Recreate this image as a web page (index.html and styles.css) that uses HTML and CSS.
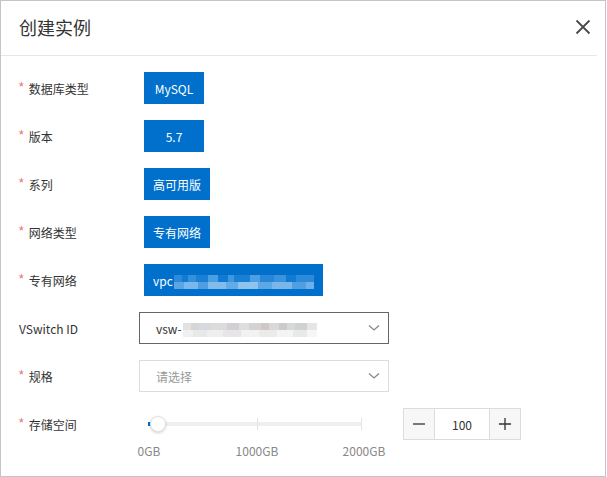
FILE: index.html
```html
<!DOCTYPE html>
<html lang="zh">
<head>
<meta charset="utf-8">
<title>创建实例</title>
<link rel="stylesheet" href="styles.css">
</head>
<body>
<div class="dialog">
  <div class="header">
    <h1 class="title">创建实例</h1>
    <svg class="close" width="16" height="16" viewBox="0 0 16 16"><path d="M1.5 1.5 L14.5 14.5 M14.5 1.5 L1.5 14.5" stroke="#4a4a4a" stroke-width="1.8" fill="none"/></svg>
  </div>
  <div class="form">
    <div class="row">
      <div class="label"><span class="req">*</span>数据库类型</div>
      <div class="tag">MySQL</div>
    </div>
    <div class="row">
      <div class="label"><span class="req">*</span>版本</div>
      <div class="tag">5.7</div>
    </div>
    <div class="row">
      <div class="label"><span class="req">*</span>系列</div>
      <div class="tag">高可用版</div>
    </div>
    <div class="row">
      <div class="label"><span class="req">*</span>网络类型</div>
      <div class="tag">专有网络</div>
    </div>
    <div class="row">
      <div class="label"><span class="req">*</span>专有网络</div>
      <div class="tag tag-vpc">vpc<span class="blur blur-blue"></span></div>
    </div>
    <div class="row">
      <div class="label label-plain">VSwitch ID</div>
      <div class="select select-active">
        <span class="select-text">vsw-<span class="blur blur-gray"></span></span>
        <svg class="chev" width="12" height="8" viewBox="0 0 12 8"><path d="M1 1.5 L6 6 L11 1.5" stroke="#888" stroke-width="1.3" fill="none"/></svg>
      </div>
    </div>
    <div class="row">
      <div class="label"><span class="req">*</span>规格</div>
      <div class="select">
        <span class="select-placeholder">请选择</span>
        <svg class="chev" width="12" height="8" viewBox="0 0 12 8"><path d="M1 1.5 L6 6 L11 1.5" stroke="#888" stroke-width="1.3" fill="none"/></svg>
      </div>
    </div>
    <div class="row row-slider">
      <div class="label"><span class="req">*</span>存储空间</div>
      <div class="slider">
        <div class="slider-rail">
          <div class="track"></div>
          <div class="fill"></div>
          <div class="tick tick-0"></div>
          <div class="tick tick-1"></div>
          <div class="tick tick-2"></div>
          <div class="handle"></div>
        </div>
        <div class="marks">
          <span class="mark mark-0">0GB</span>
          <span class="mark mark-1">1000GB</span>
          <span class="mark mark-2">2000GB</span>
        </div>
      </div>
      <div class="number">
        <div class="num-btn">
          <svg width="12" height="12" viewBox="0 0 12 12"><path d="M0 6 H12" stroke="#333" stroke-width="1.3"/></svg>
        </div>
        <div class="num-val">100</div>
        <div class="num-btn">
          <svg width="12" height="12" viewBox="0 0 12 12"><path d="M0 6 H12 M6 0 V12" stroke="#333" stroke-width="1.3"/></svg>
        </div>
      </div>
    </div>
  </div>
</div>
</body>
</html>
```

FILE: styles.css
```css
* { box-sizing: border-box; }
html, body { margin: 0; padding: 0; background: #fff; }
body {
  font-family: "Noto Sans CJK SC", "Noto Sans", sans-serif;
  color: #333;
  font-size: 12px;
}
.dialog {
  width: 606px;
  height: 477px;
  border: 1px solid #c4c4c4;
  background: #fff;
}
.header {
  height: 55px;
  margin-right: 8px;
  border-bottom: 1px solid #e6e6e6;
  display: flex;
  align-items: center;
  justify-content: space-between;
  padding: 0 6px 2px 18px;
}
.title {
  margin: 0;
  font-size: 18px;
  font-weight: 400;
  color: #333;
  line-height: 24px;
}
.close { display: block; }
.form {
  padding-top: 16px;
}
.row {
  display: flex;
  align-items: center;
  height: 32px;
  margin-bottom: 16px;
}
.label {
  width: 138px;
  padding-left: 18px;
  font-size: 12px;
  color: #333;
  display: flex;
  align-items: center;
}
.label-plain { padding-left: 18px; }
.req {
  color: #e5676a;
  margin-right: 5px;
  font-family: "Liberation Sans", sans-serif;
  font-size: 12px;
  position: relative;
  top: -1px;
}
.tag {
  margin-left: 5px;
  height: 32px;
  min-width: 60px;
  padding: 0 9px;
  background: #0070cc;
  color: #fff;
  font-size: 12px;
  display: flex;
  align-items: center;
  justify-content: center;
}
.tag-vpc {
  width: 179px;
  justify-content: flex-start;
  padding: 0 9px;
}
.blur {
  display: inline-block;
  height: 14px;
  vertical-align: middle;
}
.blur-blue {
  width: 146px;
  margin-left: 1px;
  margin-top: 3px;
  background:
    linear-gradient(90deg, #2e8ad8 0 8px, #0f7bd2 8px 14px, #3590dc 14px 22px, #1b80d4 22px 34px, #4a9fe2 34px 44px, #0f7bd2 44px 54px, #3e98df 54px 60px, #1a80d4 60px 76px, #4aa0e2 76px 86px, #2886d7 86px 100px, #3a93dd 100px 112px, #0f7bd2 112px 122px, #2e8ad8 122px 146px) top / 100% 7px no-repeat,
    linear-gradient(90deg, #5aa6e4 0 10px, #7ab7ea 10px 24px, #4d9fe2 24px 34px, #82bcec 34px 52px, #63abe6 52px 64px, #8ec3ee 64px 84px, #5ca8e5 84px 98px, #7ab6ea 98px 118px, #4f9fe2 118px 132px, #6cb0e8 132px 146px) bottom / 100% 7px no-repeat;
}
.select {
  margin-left: 0;
  width: 250px;
  height: 32px;
  border: 1px solid #dcdcdc;
  display: flex;
  align-items: center;
  justify-content: space-between;
  padding: 0 8px 0 16px;
}
.select-active { border-color: #666; }
.select-text { color: #333; display: flex; align-items: center; }
.blur-gray {
  width: 134px;
  margin-left: 1px;
  margin-top: 4px;
  background:
    linear-gradient(90deg, #e2e2e2 0 8px, #d6d6d6 8px 16px, #d7d9e0 16px 28px, #dcdcdc 28px 44px, #d3cfd4 44px 56px, #dedede 56px 66px, #d5d2d4 66px 78px, #cfc8c6 78px 86px, #d9d9d9 86px 96px, #c9ccc9 96px 104px, #d8d8d8 104px 112px, #cfd2d3 112px 124px, #e5e5e5 124px 134px) top / 100% 7px no-repeat,
    linear-gradient(90deg, #f0f0f0 0 10px, #e8e8e8 10px 24px, #efefef 24px 40px, #e6e6e6 40px 58px, #f2f2f2 58px 76px, #ebebeb 76px 94px, #f4f4f4 94px 110px, #e9e9e9 110px 124px, #f6f6f6 124px 134px) bottom / 100% 7px no-repeat;
}
.select-placeholder { color: #999; }
.chev { display: block; }

.row-slider {
  align-items: flex-start;
}
.row-slider .label { height: 32px; }
.slider {
  width: 250px;
}
.slider-rail {
  position: relative;
  height: 32px;
}
.track {
  position: absolute;
  left: 9px;
  width: 214px;
  top: 14px;
  height: 4px;
  background: #f0f0f0;
}
.fill {
  position: absolute;
  left: 9px;
  width: 3px;
  top: 14px;
  height: 4px;
  background: #0070cc;
}
.tick {
  position: absolute;
  top: 10px;
  width: 1px;
  height: 12px;
  background: #e3e3e3;
}
.tick-0 { left: 9px; background: #0070cc; height: 4px; top: 14px; }
.tick-1 { left: 118px; }
.tick-2 { left: 222px; }
.handle {
  position: absolute;
  left: 11px;
  top: 8px;
  width: 16px;
  height: 16px;
  border-radius: 50%;
  background: #fff;
  border: 1px solid #e2e2e2;
  box-shadow: 0 1px 3px rgba(0,0,0,0.18);
}
.marks {
  position: relative;
  height: 22px;
  margin-top: 2px;
  color: #888;
  font-size: 12px;
}
.mark {
  position: absolute;
  top: 0;
  transform: translateX(-50%);
  white-space: nowrap;
}
.mark-0 { left: 10px; }
.mark-1 { left: 118px; }
.mark-2 { left: 225px; }

.number {
  margin-left: 14px;
  display: flex;
  height: 32px;
  border: 1px solid #dcdcdc;
}
.num-btn {
  width: 31px;
  background: #f7f7f7;
  display: flex;
  align-items: center;
  justify-content: center;
}
.num-btn:first-child { border-right: 1px solid #dcdcdc; }
.num-btn:last-child { border-left: 1px solid #dcdcdc; }
.num-val {
  width: 54px;
  display: flex;
  align-items: center;
  justify-content: center;
  font-size: 12px;
  color: #333;
}
```
